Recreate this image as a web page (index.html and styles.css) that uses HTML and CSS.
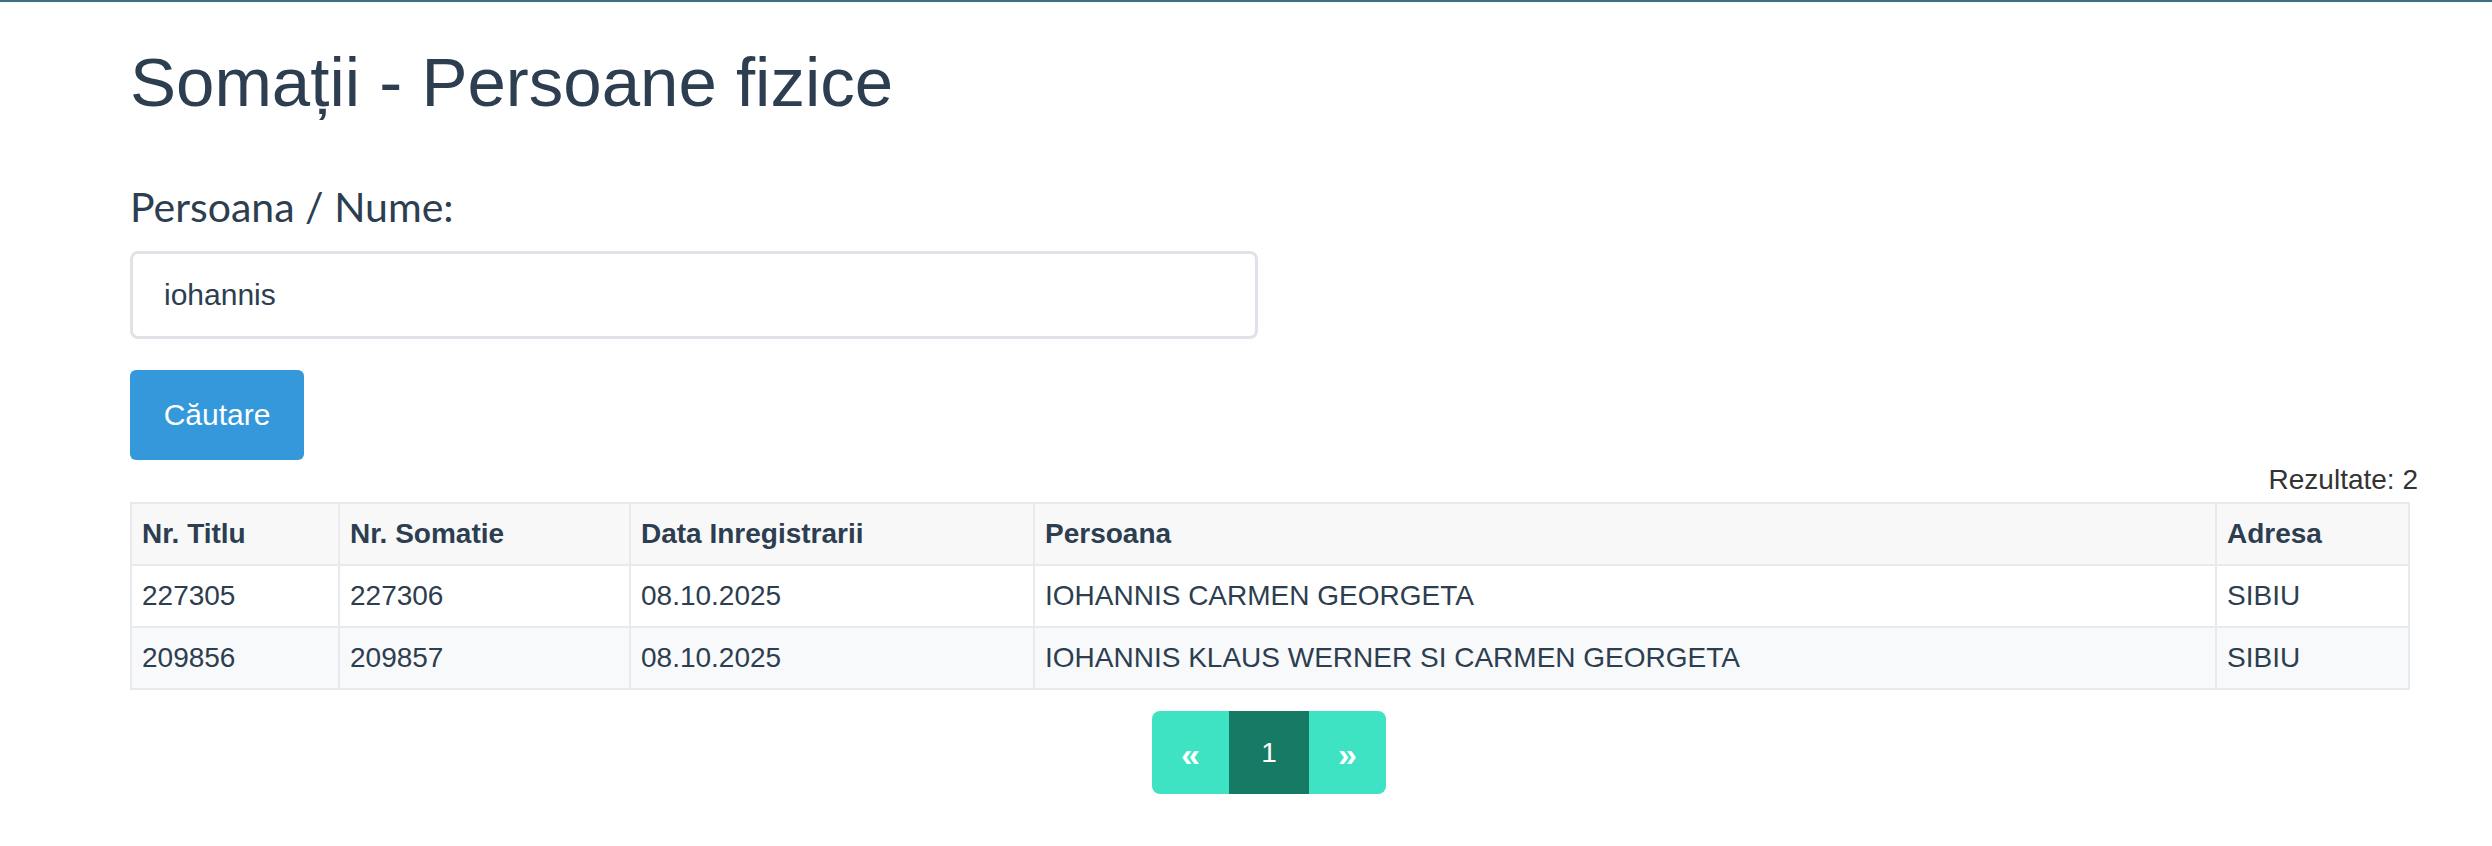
FILE: index.html
```html
<!DOCTYPE html>
<html lang="ro">
<head>
<meta charset="utf-8">
<title>Somații - Persoane fizice</title>
<link rel="stylesheet" href="styles.css">
</head>
<body>
<div class="topline"></div>
<main class="container">
  <h1 class="title">Somații - Persoane fizice</h1>
  <form class="search">
    <label class="label" for="nume">Persoana / Nume:</label>
    <input class="input" id="nume" type="text" value="iohannis">
    <button class="btn" type="button">Căutare</button>
  </form>
  <div class="count">Rezultate: 2</div>
  <table class="results">
    <colgroup>
      <col class="c1"><col class="c2"><col class="c3"><col class="c4"><col class="c5">
    </colgroup>
    <thead>
      <tr><th>Nr. Titlu</th><th>Nr. Somatie</th><th>Data Inregistrarii</th><th>Persoana</th><th>Adresa</th></tr>
    </thead>
    <tbody>
      <tr><td>227305</td><td>227306</td><td>08.10.2025</td><td>IOHANNIS CARMEN GEORGETA</td><td>SIBIU</td></tr>
      <tr class="alt"><td>209856</td><td>209857</td><td>08.10.2025</td><td>IOHANNIS KLAUS WERNER SI CARMEN GEORGETA</td><td>SIBIU</td></tr>
    </tbody>
  </table>
  <nav class="pager">
    <ul class="pagination">
      <li class="page arrow">«</li>
      <li class="page active">1</li>
      <li class="page arrow">»</li>
    </ul>
  </nav>
</main>
</body>
</html>
```
FILE: styles.css
```css
html, body {
  margin: 0;
  padding: 0;
  background: #ffffff;
}
body {
  font-family: "Liberation Sans", Arial, sans-serif;
  color: #2c3e50;
}
.topline {
  height: 2px;
  background: #3f6f7c;
  box-shadow: 0 1px 3px rgba(0, 0, 0, 0.06);
}
.container {
  width: 2288px;
  padding-left: 130px;
  display: flex;
  flex-direction: column;
}
.title {
  margin: 41px 0 0 0;
  font-size: 69px;
  line-height: 80px;
  font-weight: 400;
  color: #2c3e50;
}
.search {
  display: flex;
  flex-direction: column;
  align-items: flex-start;
}
.label {
  margin-top: 60px;
  font-family: Lato, "Liberation Sans", sans-serif;
  font-size: 41px;
  line-height: 48px;
  color: #2c3e50;
}
.input {
  margin-top: 20px;
  box-sizing: border-box;
  width: 1128px;
  height: 88px;
  border: 3px solid #dfe3e8;
  border-radius: 8px;
  padding: 0 31px;
  font-family: "Liberation Sans", Arial, sans-serif;
  font-size: 30px;
  color: #2c3e50;
  background: #fff;
  outline: none;
}
.btn {
  margin-top: 31px;
  box-sizing: border-box;
  width: 174px;
  height: 90px;
  border: 0;
  border-radius: 6px;
  background: #3498db;
  color: #ffffff;
  font-family: "Liberation Sans", Arial, sans-serif;
  font-size: 30px;
  padding: 0;
}
.count {
  align-self: stretch;
  text-align: right;
  font-size: 28px;
  line-height: 40px;
  color: #333;
}
.results {
  margin-top: 2px;
  width: 2278px;
  border-collapse: collapse;
  table-layout: fixed;
  font-size: 28px;
  line-height: 40px;
}
.c1 { width: 208px; }
.c2 { width: 291px; }
.c3 { width: 404px; }
.c4 { width: 1182px; }
.c5 { width: 193px; }
.results th,
.results td {
  border: 2px solid #e8eaed;
  padding: 10px 10px;
  text-align: left;
  color: #2c3e50;
}
.results th {
  font-weight: 700;
  background: #f8f8f9;
}
.results tr.alt td {
  background: #f8f9fa;
}
.pager {
  width: 2278px;
  display: flex;
  justify-content: center;
  margin-top: 21px;
}
.pagination {
  list-style: none;
  margin: 0;
  padding: 0;
  display: flex;
  border-radius: 8px;
  overflow: hidden;
}
.page {
  width: 77px;
  height: 83px;
  display: flex;
  align-items: center;
  justify-content: center;
  background: #3de3c3;
  color: #ffffff;
  font-size: 28px;
}
.page.arrow {
  font-size: 34px;
  font-weight: 700;
  padding-top: 4px;
  box-sizing: border-box;
}
.page.active {
  width: 80px;
  background: #167a64;
}
```
